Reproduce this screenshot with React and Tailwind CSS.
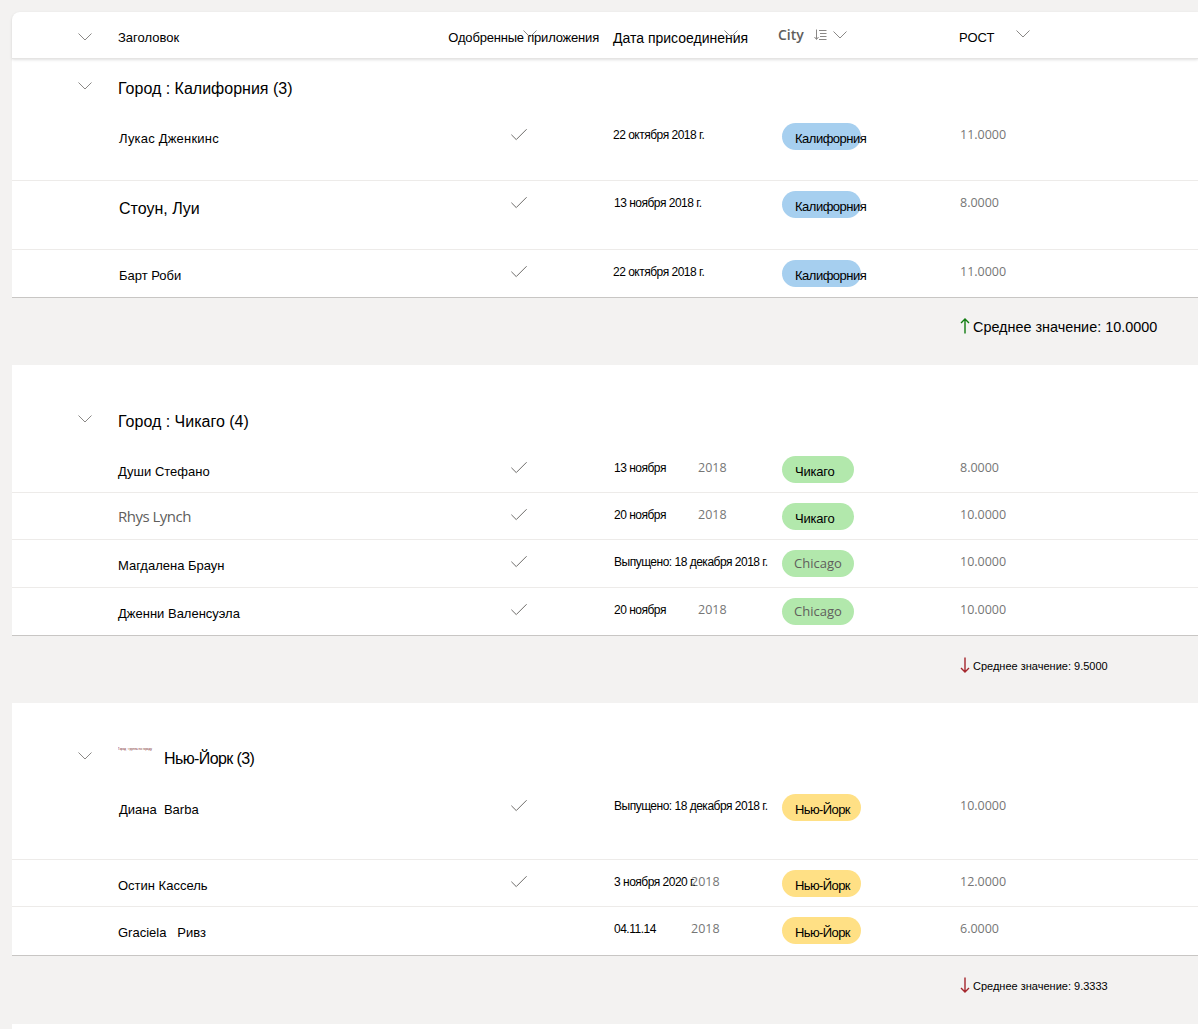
import React from 'react';
import { Check } from 'lucide-react';

const COLS = 'grid grid-cols-[500px_101px_169px_178px_1fr]';
const BLUE = 'w-[79px] bg-[#a6cfef]';
const GREEN = 'w-[72px] bg-[#b2e8ac]';
const YELLOW = 'w-[79px] bg-[#ffe085]';

const groups = [
  {
    headClass: 'h-[54px] pt-[18px]',
    title: 'Город : Калифорния (3)',
    rows: [
      { rowClass: 'h-[68px]', name: 'Лукас Дженкинс', nameClass: 'pt-[16px] text-[13px] tracking-[0.2px]', date: '22 октября 2018 г.', dateClass: 'pl-0', pill: 'Калифорния', pillClass: 'tracking-[-0.5px]', color: BLUE, value: '11.0000' },
      { rowClass: 'h-[69px]', name: 'Стоун, Луи', nameClass: 'pt-[18px] text-[16px]', date: '13 ноября 2018 г.', pill: 'Калифорния', pillClass: 'tracking-[-0.5px]', color: BLUE, value: '8.0000' },
      { rowClass: 'h-[48px]', name: 'Барт Роби', date: '22 октября 2018 г.', dateClass: 'pl-0', pill: 'Калифорния', pillClass: 'tracking-[-0.5px]', color: BLUE, value: '11.0000', last: true },
    ],
    up: true,
    footClass: 'h-[67px] pt-[19px] text-[14.4px]',
    total: 'Среднее значение: 10.0000',
  },
  {
    headClass: 'h-[81px] pt-[45px]',
    title: 'Город : Чикаго (4)',
    rows: [
      { rowClass: 'h-[47px]', name: 'Души Стефано', nameClass: 'pt-[16px] pl-[106px] text-[13px]', date: '13 ноября', year: '2018', yearClass: 'left-[85px]', pill: 'Чикаго', pillClass: 'tracking-[-0.2px]', color: GREEN, value: '8.0000' },
      { rowClass: 'h-[47px]', name: 'Rhys Lynch', nameClass: 'pt-[13px] pl-[106px] text-[15px] text-[#605e5c] font-["Open_Sans",sans-serif] tracking-[-0.5px]', date: '20 ноября', year: '2018', yearClass: 'left-[85px]', pill: 'Чикаго', pillClass: 'tracking-[-0.2px]', color: GREEN, value: '10.0000' },
      { rowClass: 'h-[48px]', name: 'Магдалена Браун', nameClass: 'pt-[16px] pl-[106px] text-[13px]', date: 'Выпущено: 18 декабря 2018 г.', pill: 'Chicago', pillLatin: true, color: GREEN, value: '10.0000' },
      { rowClass: 'h-[48px]', name: 'Дженни Валенсуэла', nameClass: 'pt-[16px] pl-[106px] text-[13px]', date: '20 ноября', year: '2018', yearClass: 'left-[85px]', pill: 'Chicago', pillLatin: true, color: GREEN, value: '10.0000', last: true },
    ],
    footClass: 'h-[67px] pt-[20px] text-[11px]',
    total: 'Среднее значение: 9.5000',
  },
  {
    headClass: 'h-[81px] pt-[44px]',
    tiny: 'Город : группа по городу',
    titleClass: 'tracking-[-0.6px]',
    title: 'Нью-Йорк (3)',
    rows: [
      { rowClass: 'h-[76px]', name: 'Диана  Barba', date: 'Выпущено: 18 декабря 2018 г.', pill: 'Нью-Йорк', pillClass: 'tracking-[-0.6px]', color: YELLOW, value: '10.0000' },
      { rowClass: 'h-[47px]', name: 'Остин Кассель', nameClass: 'pt-[16px] pl-[106px] text-[13px]', date: '3 ноября 2020 г.', year: '2018', yearClass: 'left-[78px]', pill: 'Нью-Йорк', pillClass: 'tracking-[-0.6px]', color: YELLOW, value: '12.0000' },
      { rowClass: 'h-[49px]', name: 'Graciela   Ривз', nameClass: 'pt-[16px] pl-[106px] text-[13px]', noCheck: true, date: '04.11.14', year: '2018', yearClass: 'left-[78px]', pill: 'Нью-Йорк', pillClass: 'tracking-[-0.6px]', color: YELLOW, value: '6.0000', last: true },
    ],
    footClass: 'h-[68px] pt-[20px] text-[11px]',
    total: 'Среднее значение: 9.3333',
  },
];

function Chevron({ className }) {
  return (
    <svg viewBox="0 0 14 8" className={'h-[8px] w-[14px] text-[#8a8886] ' + (className || '')} fill="none" stroke="currentColor" strokeWidth="1">
      <path d="M0.5 0.5 L7 7 L13.5 0.5" />
    </svg>
  );
}

function SortIcon() {
  return (
    <svg viewBox="0 0 13 13" className="h-[13px] w-[13px] text-[#8a8886]" fill="none" stroke="currentColor" strokeWidth="1">
      <path d="M2.5 0.5 V10 M0.5 8 L2.5 10.5 L4.5 8 M5 1.5 H12.5 M6 4.5 H12.5 M6 7.5 H12.5 M5 10.5 H12.5" />
    </svg>
  );
}

function Arrow({ up }) {
  return (
    <svg viewBox="0 0 10 16" className={'absolute left-[-13px] top-[1px] h-[16px] w-[10px] ' + (up ? 'text-[#107c10]' : 'text-[#a4262c]')} fill="none" stroke="currentColor" strokeWidth="1.4">
      {up ? <path d="M5 15.5 V1 M1 5 L5 1 L9 5" /> : <path d="M5 0.5 V15 M1 11 L5 15 L9 11" />}
    </svg>
  );
}

function Row({ row }) {
  return (
    <div className={COLS + ' ' + row.rowClass + ' border-b ' + (row.last ? 'border-[#c8c6c4]' : 'border-[#edebe9]')}>
      <div className={'leading-[20px] whitespace-pre ' + (row.nameClass && row.nameClass.includes('pl-[106px]') ? '' : 'pl-[107px] ') + (row.nameClass || 'pt-[16px] text-[13px]')}>{row.name}</div>
      <div className="-ml-[4px] pt-[11px]">
        {!row.noCheck && <Check size={22} strokeWidth={1} className="text-[#605e5c]" />}
      </div>
      <div className="relative pt-[12px] text-[12px] leading-[20px] tracking-[-0.5px] whitespace-nowrap">
        <span className={'relative z-10 ' + (row.dateClass || 'pl-px')}>{row.date}</span>
        {row.year && <span className={'absolute top-[12px] font-["Open_Sans",sans-serif] text-[12.5px] tracking-normal text-[#767676] ' + row.yearClass}>{row.year}</span>}
      </div>
      <div className="pt-[10px]">
        <div className={'h-[27px] rounded-[14px] ' + row.color}>
          {row.pillLatin
            ? <div className='pl-[12px] font-["Open_Sans",sans-serif] text-[13px] leading-[27px] text-[#605e5c]'>{row.pill}</div>
            : <div className={'whitespace-nowrap pl-[13px] pt-[6px] text-[13px] leading-[20px] ' + row.pillClass}>{row.pill}</div>}
        </div>
      </div>
      <div className='pt-[12px] font-["Open_Sans",sans-serif] text-[12.5px] leading-[20px] text-[#767676]'>{row.value}</div>
    </div>
  );
}

function Group({ group }) {
  return (
    <>
      <div className={'relative flex pl-[66px] ' + group.headClass}>
        <Chevron className="mt-[5px]" />
        <div className="ml-[26px] flex text-[16px] leading-[24px] whitespace-nowrap">
          {group.tiny && <span className="mt-[-1px] w-[46px] overflow-hidden text-[3px] leading-[6px] text-[#7a1f1f]">{group.tiny}</span>}
          <span className={group.titleClass}>{group.title}</span>
        </div>
      </div>
      {group.rows.map((r) => <Row key={r.name} row={r} />)}
      <div className={'bg-[#f3f2f1] pl-[961px] leading-[20px] ' + group.footClass}>
        <div className="relative">
          <Arrow up={group.up} />
          {group.total}
        </div>
      </div>
    </>
  );
}

export default function App() {
  return (
    <div className='h-[1029px] overflow-hidden bg-[#f3f2f1] pl-3 pt-3 font-["Liberation_Sans",Arial,sans-serif] text-black'>
      <div className="min-h-[1017px] rounded-tl-lg bg-white">
        <div className="relative h-[47px] rounded-tl-lg border-b border-[#e5e4e3] shadow-[0_1px_3px_rgba(0,0,0,0.12)]">
          <div className={COLS + ' h-full text-[13px] leading-[20px]'}>
            <div className="flex pl-[66px] pt-[16px]">
              <Chevron className="mt-[5px]" />
              <span className="ml-[26px]">Заголовок</span>
            </div>
            <div className="relative pt-[16px]">
              <span className="absolute right-[14px] whitespace-nowrap tracking-[-0.2px]">Одобренные приложения</span>
              <Chevron className="absolute left-[11px] top-[18px]" />
            </div>
            <div className="relative pt-[16px]">
              <span className="whitespace-nowrap text-[14px]">Дата присоединения</span>
              <Chevron className="absolute left-[111px] top-[18px]" />
            </div>
            <div className="flex items-center">
              <span className='-ml-1 font-["Open_Sans",sans-serif] text-[14px] font-semibold text-[#605e5c]'>City</span>
              <span className="ml-[10px]"><SortIcon /></span>
              <Chevron className="ml-[6px]" />
            </div>
            <div className="flex pt-[16px]">
              <span className="-ml-px">РОСТ</span>
              <Chevron className="ml-[22px] mt-[2px]" />
            </div>
          </div>
        </div>
        {groups.map((g) => <Group key={g.title} group={g} />)}
      </div>
    </div>
  );
}
